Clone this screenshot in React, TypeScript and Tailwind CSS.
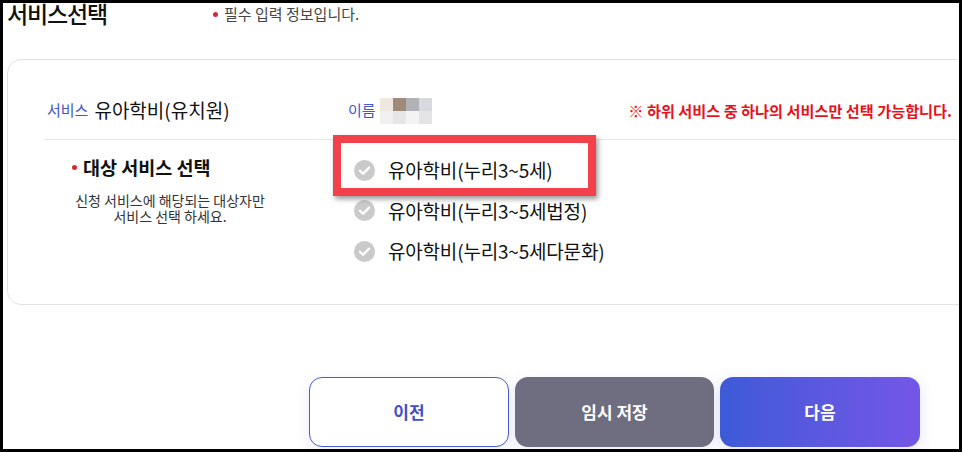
const OPTIONS = ['유아학비(누리3~5세)', '유아학비(누리3~5세법정)', '유아학비(누리3~5세다문화)'];

const BLUR = ['#eee8e1', '#9f8b7a', '#b2b2b6', '#d6d9dd', '#f1f0ef', '#e6e6e8', '#f3f3f4', '#e2e4e6'];

function CheckCircle() {
  return (
    <svg width="21" height="21" viewBox="0 0 20 20" className="shrink-0">
      <circle cx="10" cy="10" r="10" fill="#cacaca" />
      <path d="M5.6 10.2l3 2.9 5.8-5.8" fill="none" stroke="#fff" strokeWidth="2.2" strokeLinecap="round" strokeLinejoin="round" />
    </svg>
  );
}

export default function App() {
  return (
    <div
      className="w-[962px] h-[452px] bg-black p-[3px]"
      style={{ fontFamily: '"Noto Sans CJK KR", "Noto Sans", sans-serif' }}
    >
      <div className="relative w-full h-full bg-white overflow-hidden">
        {/* header */}
        <div className="flex items-center -mt-[6px] pl-[4px] h-[32px]">
          <h1 className="text-[23px] leading-[30px] font-medium tracking-[-0.05em] text-[#111]">서비스선택</h1>
          <p className="ml-[106px] mt-[3px] flex items-center text-[15px] text-[#444]">
            <span className="w-[5px] h-[5px] rounded-full bg-[#d22b38] mr-[6px]" />
            필수 입력 정보입니다.
          </p>
        </div>

        {/* card */}
        <div className="mt-[30px] ml-[4px] w-[1000px] h-[246px] rounded-[14px] border border-[#e2e2e2] bg-white">
          <div className="ml-[37px] border-b border-[#e5e5e5]">
            <div className="flex items-center w-[907px] pl-[2px] h-[79px] pt-[22px]">
              <div className="flex items-center w-[301px]">
                <span className="text-[15px] text-[#4257c9]">서비스</span>
                <span className="ml-[6px] text-[19px] text-[#111]">유아학비(유치원)</span>
              </div>
              <span className="text-[15px] text-[#4257c9]">이름</span>
              <div className="ml-[4px] grid grid-cols-4 w-[52px] h-[26px] blur-[0.6px]">
                {BLUR.map((c, i) => (
                  <div key={i} style={{ backgroundColor: c }} />
                ))}
              </div>
              <span className="ml-auto text-[15.2px] font-bold text-[#e8121b]">
                ※ 하위 서비스 중 하나의 서비스만 선택 가능합니다.
              </span>
            </div>
          </div>

          <div className="flex ml-[37px]">
            <div className="w-[260px]">
              <p className="pt-[15px] pl-[27px] flex items-center text-[18.5px] leading-[24px] font-bold text-[#111]">
                <span className="w-[5px] h-[5px] rounded-full bg-[#d22b38] mr-[6px]" />
                대상 서비스 선택
              </p>
              <p className="mt-[13px] ml-[-10px] text-center text-[14px] leading-[16px] text-[#333]">
                신청 서비스에 해당되는 대상자만
                <br />
                서비스 선택 하세요.
              </p>
            </div>
            <ul className="ml-[49px] pt-[10px]">
              {OPTIONS.map((o) => (
                <li key={o} className="flex items-center h-[40.5px] gap-[13px]">
                  <CheckCircle />
                  <span className="text-[19px] text-[#111] tracking-[-0.01em]">{o}</span>
                </li>
              ))}
            </ul>
          </div>
        </div>

        {/* buttons */}
        <div className="flex gap-[6px] ml-[306px] mt-[72px]">
          <button className="w-[200px] h-[70px] rounded-[13px] border border-[#4a5bd0] bg-white text-[17px] font-bold text-[#3f50c6] shadow-[0_4px_14px_rgba(90,90,200,0.12)]">
            이전
          </button>
          <button className="w-[199px] h-[70px] rounded-[13px] bg-[#6e6e80] text-[17px] font-bold text-white shadow-[0_4px_14px_rgba(90,90,200,0.12)]">
            임시 저장
          </button>
          <button className="w-[200px] h-[70px] rounded-[13px] bg-gradient-to-r from-[#3c5ad7] to-[#7456e6] text-[17px] font-bold text-white shadow-[0_4px_14px_rgba(90,90,200,0.18)]">
            다음
          </button>
        </div>

        {/* annotation highlight */}
        <div className="absolute left-[330px] top-[132px] w-[263px] h-[61px] border-[8px] border-[#f2414a] shadow-[2px_3px_5px_rgba(0,0,0,0.4)]" />
      </div>
    </div>
  );
}
